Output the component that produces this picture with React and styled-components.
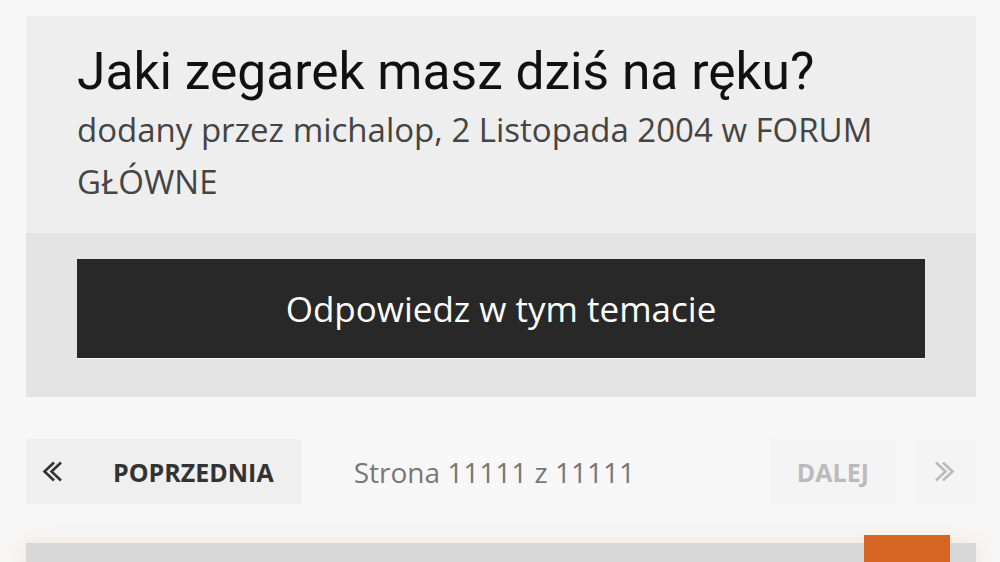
import React from "react";
import styled, { createGlobalStyle } from "styled-components";

const GlobalStyle = createGlobalStyle`
  html, body {
    margin: 0;
    padding: 0;
    background: #f7f7f7;
    font-family: "Open Sans", "Liberation Sans", sans-serif;
  }
  * { box-sizing: border-box; }
`;

const Page = styled.div`
  padding: 16px 24px 0 26px;
  height: 562px;
  overflow: hidden;
`;

const Card = styled.section`
  width: 950px;
`;

const Header = styled.div`
  background: #eeeeee;
  padding: 24px 51px 25px;
`;

const Title = styled.h1`
  margin: 0;
  font-family: Roboto, "Liberation Sans", sans-serif;
  font-weight: 400;
  font-size: 51.5px;
  line-height: 64px;
  color: #111;
`;

const Meta = styled.p`
  margin: 0;
  font-size: 33px;
  line-height: 52px;
  color: #444;
`;

const Actions = styled.div`
  background: #e4e4e4;
  padding: 26px 51px 38px;
`;

const ReplyButton = styled.button`
  display: block;
  width: 100%;
  height: 100px;
  padding: 0;
  background: #282828;
  border: none;
  border-bottom: 1px solid #fafafa;
  color: #fff;
  font-family: "Open Sans", "Liberation Sans", sans-serif;
  font-size: 35px;
  cursor: pointer;
`;

const Pager = styled.nav`
  display: flex;
  align-items: center;
  width: 950px;
  height: 65px;
  margin-top: 42px;
`;

const PagerButton = styled.a`
  display: flex;
  align-items: center;
  height: 65px;
  padding: ${(p) => p.$pad || "0 24px"};
  background: ${(p) => (p.$disabled ? "#f4f4f4" : "#efefef")};
  color: ${(p) => (p.$disabled ? "#bbbbbb" : "#333")};
  font-weight: 700;
  font-size: 25px;
  gap: ${(p) => p.$gap || "0"};
  text-decoration: none;
`;

const PageInfo = styled.span`
  flex: 1;
  padding-left: 53px;
  font-size: 28px;
  color: #777;
`;

const Spacer = styled.div`
  width: 19px;
`;

const Post = styled.div`
  position: relative;
  width: 950px;
  height: 40px;
  margin-top: 39px;
  background: #d8d8d8;
  box-shadow: 0 0 24px rgba(230, 140, 80, 0.18);
`;

const Badge = styled.div`
  position: absolute;
  right: 26px;
  top: -8px;
  width: 86px;
  height: 48px;
  background: #d76625;
`;

const DoubleChevron = ({ dir, color }) => (
  <svg width="20" height="21" viewBox="0 0 20 21" fill="none">
    <path
      d={
        dir === "left"
          ? "M12 1.5 L2.5 10.5 L12 19.5 M19 1.5 L9.5 10.5 L19 19.5"
          : "M8 1.5 L17.5 10.5 L8 19.5 M1 1.5 L10.5 10.5 L1 19.5"
      }
      stroke={color}
      strokeWidth="2.6"
    />
  </svg>
);

export default function App() {
  return (
    <>
      <GlobalStyle />
      <Page>
        <Card>
          <Header>
            <Title>Jaki zegarek masz dziś na ręku?</Title>
            <Meta>dodany przez michalop, 2 Listopada 2004 w FORUM GŁÓWNE</Meta>
          </Header>
          <Actions>
            <ReplyButton>Odpowiedz w tym temacie</ReplyButton>
          </Actions>
        </Card>
        <Pager>
          <PagerButton $pad="0 27px 0 16px" $gap="51px">
            <DoubleChevron dir="left" color="#333" />
            POPRZEDNIA
          </PagerButton>
          <PageInfo>Strona 11111 z 11111</PageInfo>
          <PagerButton $disabled $pad="0 26px">DALEJ</PagerButton>
          <Spacer />
          <PagerButton $disabled $pad="0 21px">
            <DoubleChevron dir="right" color="#bbbbbb" />
          </PagerButton>
        </Pager>
        <Post>
          <Badge />
        </Post>
      </Page>
    </>
  );
}
